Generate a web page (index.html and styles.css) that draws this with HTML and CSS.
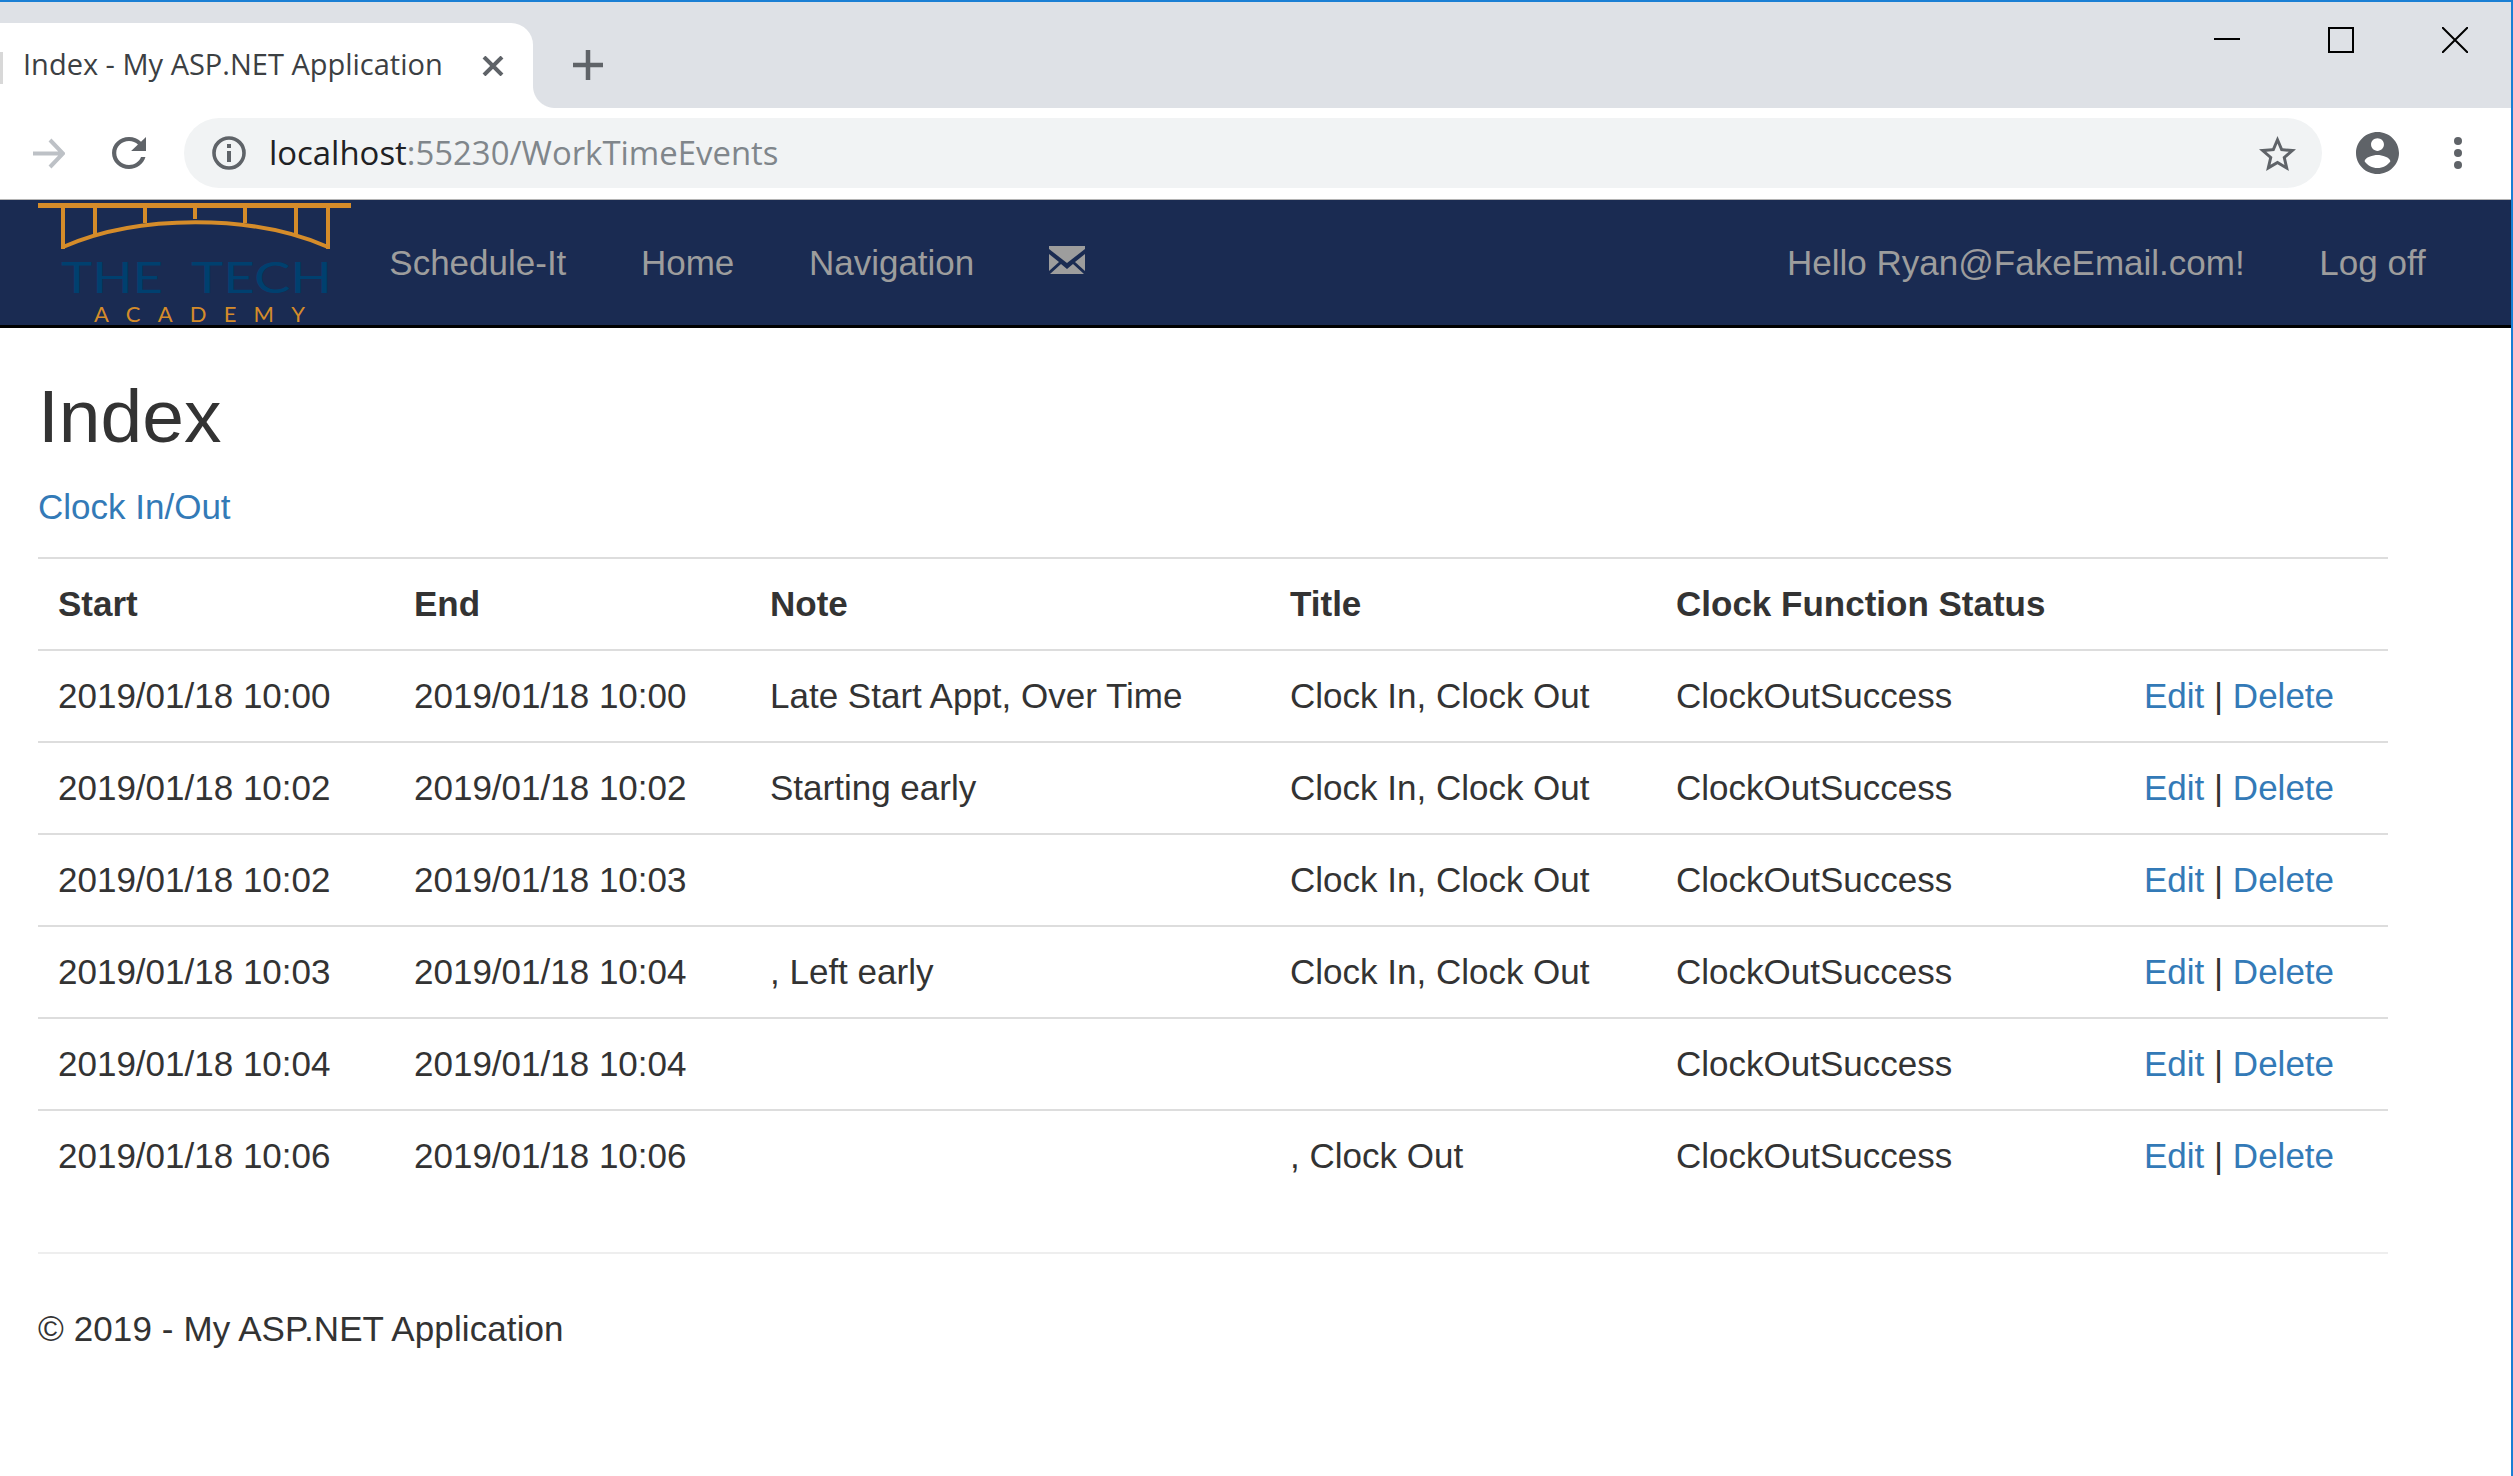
FILE: index.html
```html
<!DOCTYPE html>
<html lang="en">
<head>
<meta charset="utf-8">
<title>Index - My ASP.NET Application</title>
<link rel="stylesheet" href="styles.css">
</head>
<body>
<div class="window">
  <div class="tabstrip">
    <div class="tab">
      <span class="favicon"></span>
      <span class="tab-title">Index - My ASP.NET Application</span>
      <svg class="tab-close" viewBox="0 0 22 20"><path d="M2 1L20 19M20 1L2 19"/></svg>
    </div>
    <svg class="newtab" viewBox="0 0 32 32"><path d="M16 1V31M1 16H31"/></svg>
    <div class="controls">
      <svg class="ctl" viewBox="0 0 26 26"><path d="M0 12H26"/></svg>
      <svg class="ctl" viewBox="0 0 26 26"><path d="M1 1H25V25H1Z"/></svg>
      <svg class="ctl" viewBox="0 0 26 26"><path d="M0 0L26 26M26 0L0 26"/></svg>
    </div>
  </div>
  <div class="toolbar">
    <svg class="arrow" viewBox="0 0 33 31"><path d="M1 15.5H30M18 2L31 15.5L18 29"/></svg>
    <svg class="reload" viewBox="4 4 16 16" preserveAspectRatio="none"><path d="M17.65 6.35C16.2 4.9 14.21 4 12 4c-4.42 0-7.99 3.58-7.99 8s3.57 8 7.99 8c3.73 0 6.84-2.55 7.73-6h-2.08c-.82 2.33-3.04 4-5.65 4-3.31 0-6-2.69-6-6s2.69-6 6-6c1.66 0 3.14.69 4.22 1.78L13 11h7V4l-2.35 2.35z"/></svg>
    <div class="omnibox">
      <svg class="info" viewBox="0 0 34 34"><circle cx="17" cy="17" r="15"/><rect x="15" y="15" width="4" height="11"/><rect x="15" y="8" width="4" height="4"/></svg>
      <span class="url"><span class="host">localhost</span>:55230/WorkTimeEvents</span>
      <svg class="star" viewBox="2 2 20 19" preserveAspectRatio="none"><path d="M22 9.24l-7.19-.62L12 2 9.19 8.63 2 9.24l5.46 4.73L5.82 21 12 17.27 18.18 21l-1.63-7.03L22 9.24zM12 15.4l-3.76 2.27 1-4.28-3.32-2.88 4.38-.38L12 6.1l1.71 4.04 4.38.38-3.32 2.88 1 4.28L12 15.4z"/></svg>
    </div>
    <svg class="avatar" viewBox="2 2 20 20" preserveAspectRatio="none"><path d="M12 2C6.48 2 2 6.48 2 12s4.48 10 10 10 10-4.48 10-10S17.52 2 12 2zm0 3c1.66 0 3 1.34 3 3s-1.34 3-3 3-3-1.34-3-3 1.34-3 3-3zm0 14.2c-2.5 0-4.71-1.28-6-3.22.03-1.99 4-3.08 6-3.08 1.99 0 5.97 1.09 6 3.08-1.29 1.94-3.5 3.22-6 3.22z"/></svg>
    <svg class="dots" viewBox="0 0 8 32"><circle cx="4" cy="4" r="4"/><circle cx="4" cy="16" r="4"/><circle cx="4" cy="28" r="4"/></svg>
  </div>
  <nav class="navbar">
    <svg class="logo" viewBox="0 0 314 130">
      <path class="bridge-deck" d="M0 5.5H313"/>
      <path class="bridge" d="M25 5V47H27M57 5V34M107 5V23M157 5V19M207 5V23M258 5V34M290 5V47H288M25 47C100 14 215 14 290 47"/>
      <text class="logo-tech" x="23" y="93" textLength="102" lengthAdjust="spacingAndGlyphs">THE</text>
      <text class="logo-tech" x="153" y="93" textLength="141" lengthAdjust="spacingAndGlyphs">TECH</text>
      <text class="logo-academy" x="56" y="122" textLength="211" lengthAdjust="spacing">ACADEMY</text>
    </svg>
    <a class="nav-link">Schedule-It</a>
    <a class="nav-link">Home</a>
    <a class="nav-link">Navigation</a>
    <a class="nav-link mail"><svg class="envelope" viewBox="0 0 36 28"><path d="M0 0H36V3L18 17L0 3Z"/><path d="M0 8L10 16L0 25Z"/><path d="M36 8L26 16L36 25Z"/><path d="M12 18L18 23L24 18L35 28H1Z"/></svg></a>
    <span class="nav-spacer"></span>
    <a class="nav-link">Hello Ryan@FakeEmail.com!</a>
    <a class="nav-link">Log off</a>
  </nav>
  <main class="content">
    <h1 class="title">Index</h1>
    <p class="action"><a class="link">Clock In/Out</a></p>
    <table class="events">
      <thead>
        <tr><th class="c1">Start</th><th class="c2">End</th><th class="c3">Note</th><th class="c4">Title</th><th class="c5">Clock Function Status</th><th class="c6"></th></tr>
      </thead>
      <tbody>
        <tr><td>2019/01/18 10:00</td><td>2019/01/18 10:00</td><td>Late Start Appt, Over Time</td><td>Clock In, Clock Out</td><td>ClockOutSuccess</td><td><a class="link">Edit</a> | <a class="link">Delete</a></td></tr>
        <tr><td>2019/01/18 10:02</td><td>2019/01/18 10:02</td><td>Starting early</td><td>Clock In, Clock Out</td><td>ClockOutSuccess</td><td><a class="link">Edit</a> | <a class="link">Delete</a></td></tr>
        <tr><td>2019/01/18 10:02</td><td>2019/01/18 10:03</td><td></td><td>Clock In, Clock Out</td><td>ClockOutSuccess</td><td><a class="link">Edit</a> | <a class="link">Delete</a></td></tr>
        <tr><td>2019/01/18 10:03</td><td>2019/01/18 10:04</td><td>, Left early</td><td>Clock In, Clock Out</td><td>ClockOutSuccess</td><td><a class="link">Edit</a> | <a class="link">Delete</a></td></tr>
        <tr><td>2019/01/18 10:04</td><td>2019/01/18 10:04</td><td></td><td></td><td>ClockOutSuccess</td><td><a class="link">Edit</a> | <a class="link">Delete</a></td></tr>
        <tr><td>2019/01/18 10:06</td><td>2019/01/18 10:06</td><td></td><td>, Clock Out</td><td>ClockOutSuccess</td><td><a class="link">Edit</a> | <a class="link">Delete</a></td></tr>
      </tbody>
    </table>
    <hr class="rule">
    <footer class="foot">© 2019 - My ASP.NET Application</footer>
  </main>
</div>
</body>
</html>
```
FILE: styles.css
```css
* { box-sizing: border-box; }
html, body { margin: 0; padding: 0; background: #fff; }
.window {
  height: 1476px;
  overflow: hidden;
  border-top: 2px solid #1a7fd4;
  border-right: 2px solid #1a7fd4;
  font-family: "Liberation Sans", Arial, sans-serif;
  font-size: 35px;
  line-height: 50px;
  color: #333;
  background: #fff;
}
.tabstrip {
  display: flex;
  align-items: flex-start;
  height: 106px;
  padding-top: 21px;
  padding-right: 43px;
  background: #dee1e6;
}
.tab {
  position: relative;
  display: flex;
  align-items: center;
  width: 533px;
  height: 85px;
  padding-left: 23px;
  padding-bottom: 4px;
  background: #fff;
  border-radius: 0 22px 0 0;
}
.tab::after {
  content: "";
  position: absolute;
  left: 100%;
  bottom: 0;
  width: 22px;
  height: 22px;
  background: radial-gradient(circle at 100% 0, #dee1e6 21.5px, #fff 22.5px);
}
.favicon {
  position: absolute;
  left: 0;
  top: 29px;
  width: 3px;
  height: 32px;
  background: #d8d8d8;
}
.tab-title {
  font-family: "Open Sans", sans-serif;
  font-size: 29px;
  line-height: 40px;
  color: #3c4043;
  white-space: nowrap;
}
.tab-close {
  position: absolute;
  left: 482px;
  top: 33px;
  width: 22px;
  height: 20px;
  fill: none;
  stroke: #5f6368;
  stroke-width: 4;
}
.newtab {
  width: 32px;
  height: 32px;
  margin-left: 39px;
  margin-top: 26px;
  fill: none;
  stroke: #5f6368;
  stroke-width: 4.5;
}
.controls {
  display: flex;
  gap: 88px;
  margin-left: auto;
  margin-top: 4px;
}
.ctl {
  width: 26px;
  height: 26px;
  fill: none;
  stroke: #000;
  stroke-width: 2;
}
.toolbar {
  display: flex;
  align-items: center;
  height: 92px;
  padding: 0 49px 1px 32px;
  background: #fff;
  border-bottom: 1px solid #b4b4b4;
}
.arrow {
  flex: none;
  width: 33px;
  height: 31px;
  fill: none;
  stroke: #bdc1c6;
  stroke-width: 4;
}
.reload {
  flex: none;
  width: 34px;
  height: 32px;
  margin-left: 47px;
  fill: #5f6368;
}
.omnibox {
  flex: 1;
  display: flex;
  align-items: center;
  height: 70px;
  margin-left: 38px;
  margin-right: 34px;
  padding-left: 28px;
  padding-right: 26px;
  background: #f1f3f4;
  border-radius: 35px;
}
.info {
  flex: none;
  width: 34px;
  height: 34px;
}
.info circle {
  fill: none;
  stroke: #5f6368;
  stroke-width: 3.6;
}
.info rect { fill: #5f6368; }
.url {
  margin-left: 23px;
  font-family: "Open Sans", sans-serif;
  font-size: 32.9px;
  line-height: 44px;
  color: #80868b;
  white-space: nowrap;
}
.host { color: #202124; }
.star {
  flex: none;
  width: 37px;
  height: 35px;
  margin-left: auto;
  fill: #5f6368;
}
.avatar {
  flex: none;
  width: 43px;
  height: 42px;
  fill: #5f6368;
}
.dots {
  flex: none;
  width: 8px;
  height: 32px;
  margin-left: 55px;
  fill: #5f6368;
}
.navbar {
  display: flex;
  align-items: center;
  height: 128px;
  padding: 0 0 0 38px;
  background: #1a2b52;
  border-bottom: 3px solid #000;
}
.logo {
  flex: none;
  width: 314px;
  height: 130px;
  align-self: flex-start;
}
.bridge-deck {
  fill: none;
  stroke: #d58c2a;
  stroke-width: 5;
}
.bridge {
  fill: none;
  stroke: #d58c2a;
  stroke-width: 4;
}
.logo-tech {
  font-family: "Lato", sans-serif;
  font-size: 42px;
  font-weight: 400;
  fill: #00406f;
}
.logo-academy {
  font-family: "Lato", sans-serif;
  font-size: 22px;
  fill: #d58c2a;
}
.nav-link {
  display: block;
  padding: 0 37.3px;
  color: #9d9d9d;
  white-space: nowrap;
}
.mail { display: flex; align-items: center; }
.envelope {
  width: 36px;
  height: 28px;
  margin-top: -6px;
  fill: #9d9d9d;
}
.nav-spacer { flex: 1; }
.navbar .nav-link:last-child { margin-right: 48px; }
.content {
  padding: 0 123px 0 38px;
}
.title {
  margin: 0;
  padding-top: 40px;
  font-size: 75px;
  font-weight: 400;
  line-height: 96px;
  color: #333;
}
.action {
  margin: 0;
  padding-top: 18px;
  line-height: 50px;
}
.link { color: #337ab7; text-decoration: none; }
.events {
  width: 100%;
  margin-top: 25px;
  border-collapse: collapse;
  table-layout: fixed;
}
.events th, .events td {
  padding: 20px;
  height: 92px;
  text-align: left;
  vertical-align: top;
  line-height: 50px;
  border-top: 2px solid #ddd;
}
.events th { font-weight: 700; }
.c1, .c2 { width: 356px; }
.c3 { width: 520px; }
.c4 { width: 386px; }
.c5 { width: 468px; }
.rule {
  height: 2px;
  margin: 50px 0 0;
  border: 0;
  background: #eee;
}
.foot {
  margin-top: 50px;
  line-height: 50px;
  letter-spacing: 0.1px;
}
```
